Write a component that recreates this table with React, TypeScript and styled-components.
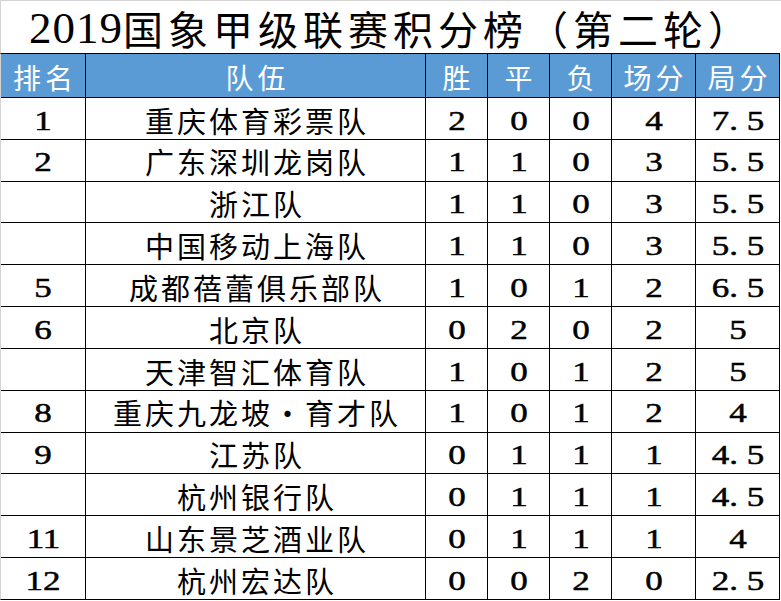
import * as React from 'react';
import styled, { createGlobalStyle } from 'styled-components';

const GlobalStyle = createGlobalStyle`
  html, body {
    margin: 0;
    padding: 0;
    background: #ffffff;
  }
`;

const cjk = `"Noto Sans CJK SC", "Noto Sans", sans-serif`;
const serif = `"Liberation Serif", "Noto Sans CJK SC", serif`;

const Sheet = styled.div`
  width: 781px;
  height: 601px;
  box-sizing: border-box;
  border-top: 1px solid #d4d4d4;
  display: flex;
  flex-direction: column;
  overflow: hidden;
`;

const Title = styled.h1`
  margin: 0;
  height: 52px;
  flex: none;
  border-left: 1px solid #d4d4d4;
  display: flex;
  align-items: center;
  justify-content: center;
  padding-top: 2px;
  box-sizing: border-box;
  font-family: ${cjk};
  font-weight: 400;
  font-size: 40px;
  line-height: 1.2;
  letter-spacing: 5px;
  color: #000;

  span.year {
    font-family: ${serif};
    font-size: 45px;
    letter-spacing: 1px;
  }
`;

const Grid = styled.div`
  width: 780px;
  height: 547px;
  flex: none;
  box-sizing: border-box;
  display: grid;
  grid-template-columns: 84px 339px 61px 61px 61px 83px 83px;
  grid-template-rows: 43px repeat(12, minmax(0, 1fr));
  gap: 1px;
  background: #000;
  border-top: 1px solid #000;
  border-right: 1px solid #000;
  border-bottom: 1px solid #000;
  border-left: 1px solid #d4d4d4;
`;

const HeadCell = styled.div`
  background: #5b9bd5;
  color: #ffffff;
  display: flex;
  align-items: center;
  justify-content: center;
  padding-top: 5px;
  box-sizing: border-box;
  font-family: ${cjk};
  font-size: 28px;
  line-height: 1.2;
  letter-spacing: 4px;
  text-indent: 4px;
  min-height: 0;
`;

const Cell = styled.div<{ $cjk?: boolean }>`
  background: #ffffff;
  color: #000;
  display: flex;
  align-items: center;
  justify-content: center;
  padding-top: ${p => (p.$cjk ? '3px' : '4px')};
  box-sizing: border-box;
  font-family: ${p => (p.$cjk ? cjk : serif)};
  font-size: ${p => (p.$cjk ? '29px' : '28px')};
  line-height: 1.2;
  letter-spacing: ${p => (p.$cjk ? '3px' : '0')};
  text-indent: ${p => (p.$cjk ? '3px' : '0')};
  white-space: nowrap;
  min-height: 0;
`;

const Num = styled.span`
  display: inline-block;
  transform: scaleX(1.25);
  -webkit-text-stroke: 0.5px #000;
`;

type Row = {
  rank: string;
  team: string;
  win: number;
  draw: number;
  loss: number;
  points: number;
  games: string;
};

const rows: Row[] = [
  { rank: '1', team: '重庆体育彩票队', win: 2, draw: 0, loss: 0, points: 4, games: '7. 5' },
  { rank: '2', team: '广东深圳龙岗队', win: 1, draw: 1, loss: 0, points: 3, games: '5. 5' },
  { rank: '', team: '浙江队', win: 1, draw: 1, loss: 0, points: 3, games: '5. 5' },
  { rank: '', team: '中国移动上海队', win: 1, draw: 1, loss: 0, points: 3, games: '5. 5' },
  { rank: '5', team: '成都蓓蕾俱乐部队', win: 1, draw: 0, loss: 1, points: 2, games: '6. 5' },
  { rank: '6', team: '北京队', win: 0, draw: 2, loss: 0, points: 2, games: '5' },
  { rank: '', team: '天津智汇体育队', win: 1, draw: 0, loss: 1, points: 2, games: '5' },
  { rank: '8', team: '重庆九龙坡•育才队', win: 1, draw: 0, loss: 1, points: 2, games: '4' },
  { rank: '9', team: '江苏队', win: 0, draw: 1, loss: 1, points: 1, games: '4. 5' },
  { rank: '', team: '杭州银行队', win: 0, draw: 1, loss: 1, points: 1, games: '4. 5' },
  { rank: '11', team: '山东景芝酒业队', win: 0, draw: 1, loss: 1, points: 1, games: '4' },
  { rank: '12', team: '杭州宏达队', win: 0, draw: 0, loss: 2, points: 0, games: '2. 5' },
];

const headers = ['排名', '队伍', '胜', '平', '负', '场分', '局分'];

export default function App() {
  return (
    <>
      <GlobalStyle />
      <Sheet>
        <Title>
          <span className="year">2019</span>国象甲级联赛积分榜（第二轮）
        </Title>
        <Grid>
          {headers.map(h => (
            <HeadCell key={h}>{h}</HeadCell>
          ))}
          {rows.map((r, i) => (
            <React.Fragment key={i}>
              <Cell><Num>{r.rank}</Num></Cell>
              <Cell $cjk>{r.team}</Cell>
              <Cell><Num>{r.win}</Num></Cell>
              <Cell><Num>{r.draw}</Num></Cell>
              <Cell><Num>{r.loss}</Num></Cell>
              <Cell><Num>{r.points}</Num></Cell>
              <Cell><Num>{r.games}</Num></Cell>
            </React.Fragment>
          ))}
        </Grid>
      </Sheet>
    </>
  );
}
